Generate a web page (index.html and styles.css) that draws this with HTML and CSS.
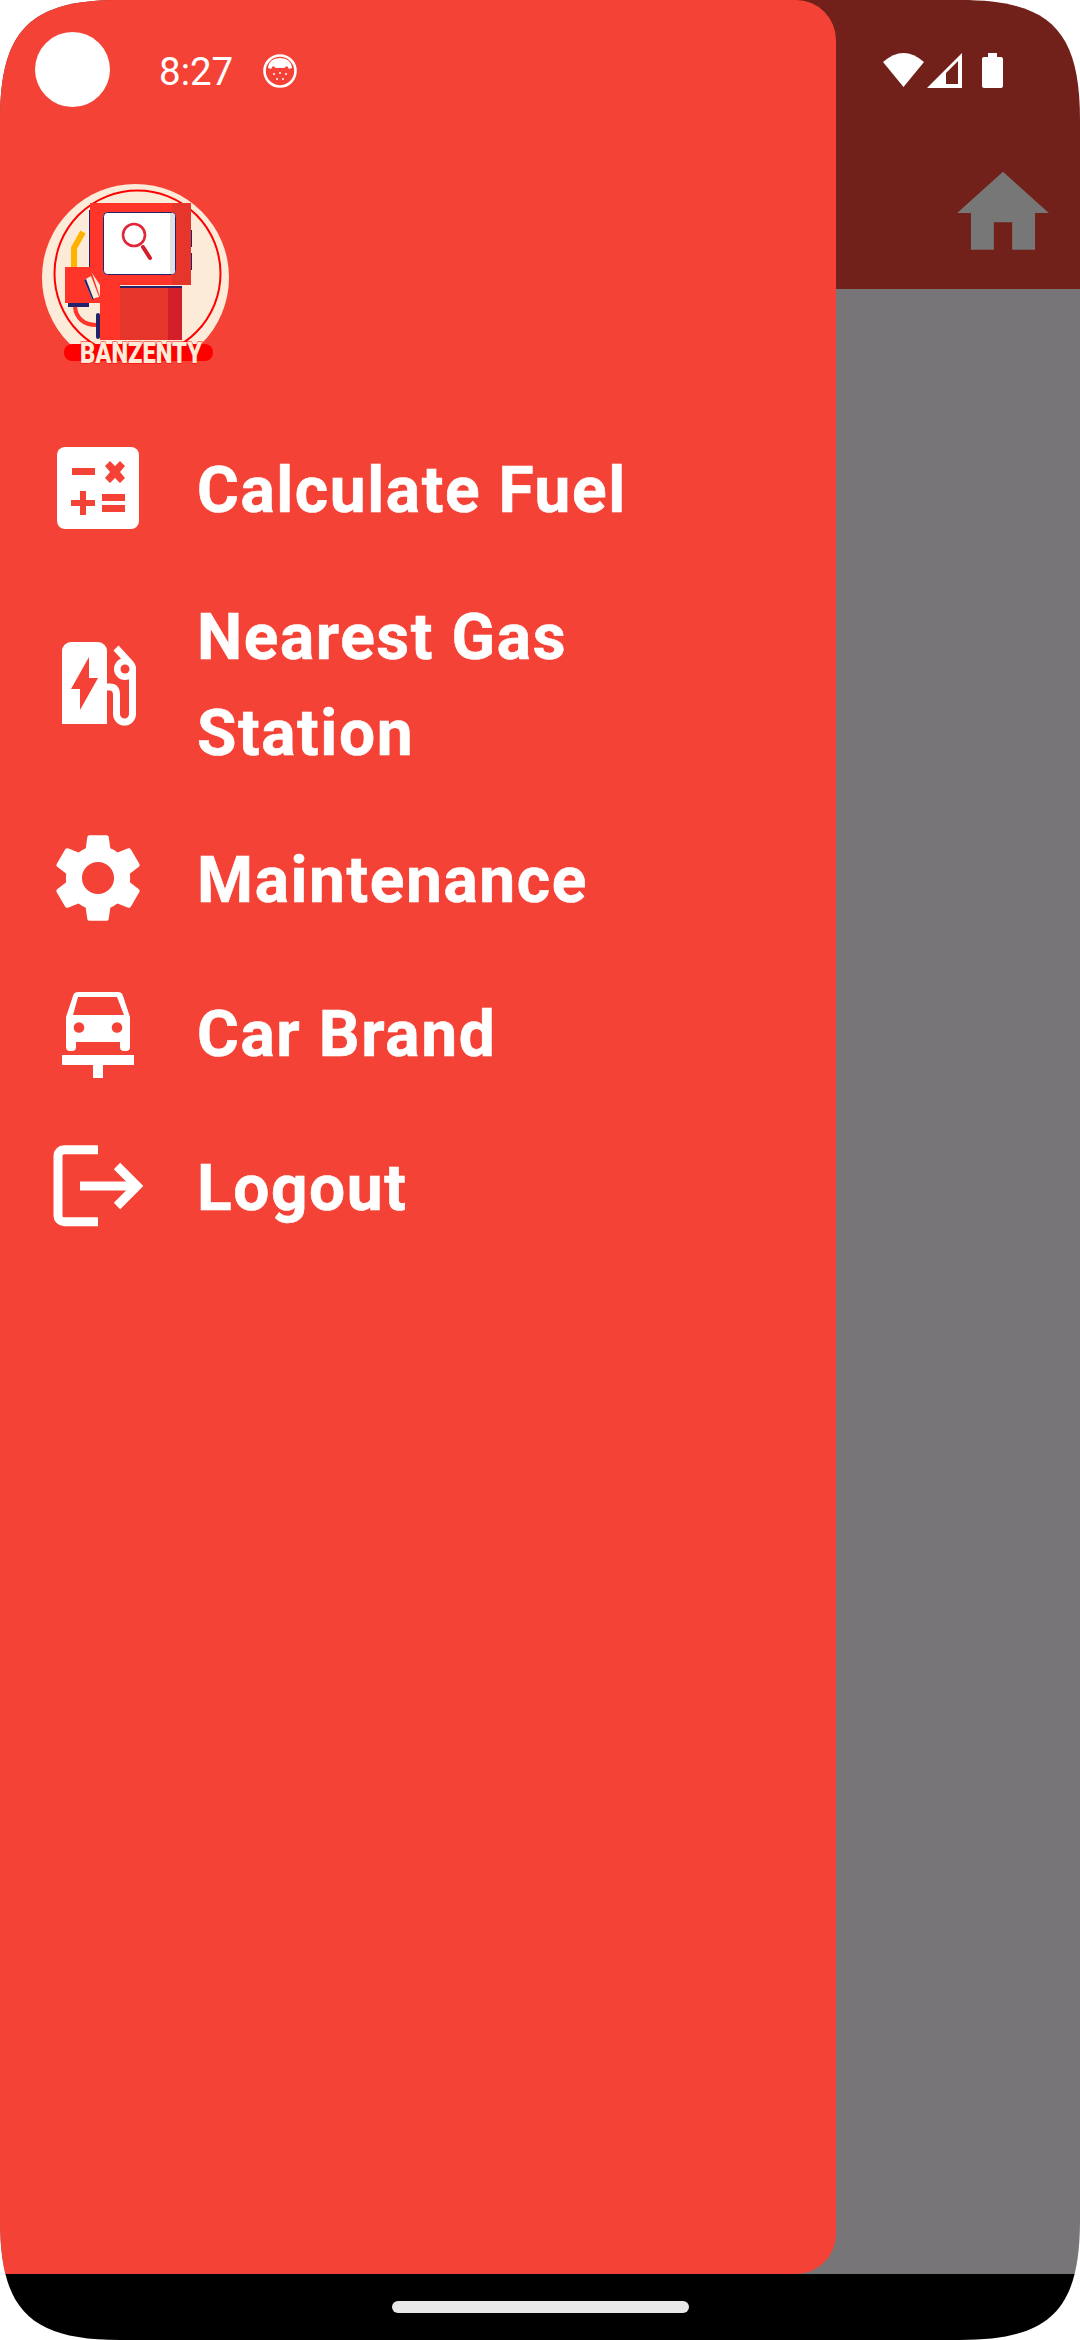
FILE: index.html
```html
<!DOCTYPE html>
<html lang="en">
  <head>
    <meta charset="UTF-8" />
    <meta name="viewport" content="width=device-width, initial-scale=1.0" />
    <title>Banzenty</title>
    <link rel="stylesheet" href="styles.css">
  </head>
  <body>
    <div class="screen">
      <header class="appbar">
        <svg class="home-icon" viewBox="0 0 24 24"><path d="M10 20v-6h4v6h5v-8h3L12 3 2 12h3v8z" /></svg>
      </header>
      <main class="scrim"></main>
      <footer class="navbar"><span class="nav-handle"></span></footer>

      <aside class="drawer">
        <svg class="logo" viewBox="0 0 230 210">
          <clipPath id="logo-cut"><rect x="0" y="0" width="230" height="178" /></clipPath>
          <g clip-path="url(#logo-cut)">
            <circle cx="115.500" cy="107.500" r="93.500" fill="#fdebd9" />
            <circle cx="117.500" cy="103.500" r="83" fill="none" stroke="#f00" stroke-width="2" />
          </g>
          <rect x="69" y="40" width="2" height="57" fill="#23236b" />
          <rect x="170" y="60" width="2" height="17" fill="#23236b" />
          <rect x="170" y="83" width="2" height="17" fill="#23236b" />
          <polyline points="63,62 54,78 54,97" fill="none" stroke="#ffb300" stroke-width="6" />
          <path d="M70 33H152V115H100V170H80V115L70 100z" fill="#ff3529" />
          <rect x="152" y="33" width="19" height="82" fill="#e6352a" />
          <rect x="100" y="116" width="62" height="2" fill="#23236b" />
          <rect x="100" y="118" width="48" height="52" fill="#e6352a" />
          <rect x="148" y="118" width="14" height="52" fill="#d21f2a" />
          <rect x="76" y="143" width="4" height="26" rx="2" fill="#23236b" />
          <rect x="83.500" y="42.500" width="72" height="62" rx="4" fill="#fff" stroke="#23236b" stroke-width="1" />
          <path d="M150 43h2a3 3 0 0 1 3 3v55a3 3 0 0 1-3 3h-2z" fill="#e0e0e4" />
          <circle cx="114" cy="65" r="11" fill="#fff" stroke="#e0263a" stroke-width="2.600" />
          <line x1="123" y1="77" x2="130" y2="88" stroke="#d21f2a" stroke-width="4" stroke-linecap="round" />
          <rect x="48" y="132" width="21" height="5" fill="#23236b" />
          <path d="M55 137C56 148 64 155 76 155" fill="none" stroke="#ff3529" stroke-width="4" />
          <path d="M45 97H70L80 127V133H45z" fill="#ff3529" />
          <path d="M64 110L71 106L79 127L72 129z" fill="#fdebd9" />
          <path d="M64 110L66 109L74 130L72 129z" fill="#23236b" />
          <rect x="44" y="174" width="149" height="17" rx="8" fill="#f00" />
          <text class="logo-text" x="60" y="192.500" textLength="122" lengthAdjust="spacingAndGlyphs">BANZENTY</text>
        </svg>

        <nav class="menu">
          <div class="menu-row">
            <svg class="menu-icon" viewBox="0 0 100 100">
              <rect x="9" y="9" width="82" height="82" rx="8" fill="#fff" />
              <g fill="#f44336">
                <rect x="24" y="30" width="23" height="7" />
                <path d="M62 23l5 5 5-5 5 5-5 6 5 6-5 5-5-5-5 5-5-5 5-6-5-6z" />
                <path d="M32 53h6v9h9v6h-9v9h-6v-9h-9v-6h9z" />
                <rect x="54" y="56" width="23" height="7" />
                <rect x="54" y="67" width="23" height="7" />
              </g>
            </svg>
            <span class="menu-label">Calculate Fuel</span>
          </div>
          <div class="menu-row">
            <svg class="menu-icon" viewBox="0 0 100 100">
              <path d="M14 91V18a9 9 0 0 1 9-9h27a9 9 0 0 1 9 9v73z" fill="#fff" />
              <path d="M41 24L23 56H32V77L50 45H41z" fill="#f44336" />
              <path d="M59 54H62Q68.500 54 68.500 62V81A8 8 0 0 0 84.500 81V38Q84.500 33 81 29L68 15" fill="none" stroke="#fff" stroke-width="7" />
              <circle cx="77" cy="36" r="11" fill="#fff" />
              <circle cx="77" cy="36" r="4.500" fill="#f44336" />
            </svg>
            <span class="menu-label">Nearest Gas Station</span>
          </div>
          <div class="menu-row">
            <svg class="menu-icon" viewBox="0 0 100 100">
              <path transform="translate(-3.500 -3.500) scale(4.460)" fill="#fff" d="M19.14 12.94c.04-.3.06-.61.06-.94 0-.32-.02-.64-.07-.94l2.03-1.58c.18-.14.23-.41.12-.61l-1.92-3.32c-.12-.22-.37-.29-.59-.22l-2.39.96c-.5-.38-1.03-.7-1.62-.94l-.36-2.54c-.04-.24-.24-.41-.48-.41h-3.84c-.24 0-.43.17-.47.41l-.36 2.54c-.59.24-1.13.57-1.62.94l-2.39-.96c-.22-.08-.47 0-.59.22L2.74 8.87c-.12.21-.08.47.12.61l2.03 1.58c-.05.3-.09.63-.09.94s.02.64.07.94l-2.03 1.58c-.18.14-.23.41-.12.61l1.92 3.32c.12.22.37.29.59.22l2.39-.96c.5.38 1.03.7 1.62.94l.36 2.54c.05.24.24.41.48.41h3.84c.24 0 .44-.17.47-.41l.36-2.54c.59-.24 1.13-.56 1.62-.94l2.39.96c.22.08.47 0 .59-.22l1.92-3.32c.12-.22.07-.47-.12-.61l-2.01-1.58zM12 15.600c-1.980 0-3.600-1.620-3.600-3.600s1.620-3.600 3.600-3.600 3.600 1.620 3.600 3.600-1.620 3.600-3.600 3.600z" />
            </svg>
            <span class="menu-label">Maintenance</span>
          </div>
          <div class="menu-row">
            <svg class="menu-icon" viewBox="0 -3 100 100">
              <path d="M18 32L25 11Q26 7 30 7H70Q74 7 75 11L82 32V62Q82 66 78 66H76Q72 66 72 62V57H28V62Q28 66 24 66H22Q18 66 18 62z" fill="#fff" />
              <path d="M25 30L30 12H69L76 30z" fill="#f44336" />
              <circle cx="31" cy="42.500" r="5.300" fill="#f44336" />
              <circle cx="69" cy="42.500" r="5.300" fill="#f44336" />
              <path d="M14 70H86V80H55V93H45V80H14z" fill="#fff" />
            </svg>
            <span class="menu-label">Car Brand</span>
          </div>
          <div class="menu-row">
            <svg class="menu-icon" viewBox="0 0 100 100">
              <g fill="none" stroke="#fff" stroke-width="9">
                <path d="M50 13.700H16A6 6 0 0 0 10 19.700V79.700A6 6 0 0 0 16 85.700H50" />
                <path d="M32 50H88" />
                <path d="M69 30L89 50L69 70" />
              </g>
            </svg>
            <span class="menu-label">Logout</span>
          </div>
        </nav>
      </aside>

      <div class="statusbar">
        <span class="camera-dot"></span>
        <span class="status-time">8:27</span>
        <svg class="status-app" viewBox="0 0 34 34">
          <circle cx="17" cy="17" r="15.500" fill="none" stroke="#fff" stroke-width="2.600" />
          <path d="M5 14Q6 4 17 4T29 14L26 15L24 12L21 14H13L10 12L8 15z" fill="#fff" />
          <g fill="#fff">
            <circle cx="11" cy="20" r="1" /><circle cx="17" cy="19" r="1" /><circle cx="23" cy="20" r="1" />
            <circle cx="14" cy="25" r="1" /><circle cx="20" cy="25" r="1" />
          </g>
        </svg>
        <div class="status-right">
          <svg class="status-wifi" viewBox="0 0 41 35"><path d="M0 9Q20.500 -9 41 9L20.500 34z" fill="#fff" /></svg>
          <svg class="status-signal" viewBox="0 0 35 35"><path fill-rule="evenodd" d="M0 35L35 0V35zM19 31H31V8L19 20z" fill="#fff" /></svg>
          <svg class="status-battery" viewBox="0 0 21 35"><path d="M6 0H15V4H19a2 2 0 0 1 2 2V33a2 2 0 0 1-2 2H2a2 2 0 0 1-2-2V6a2 2 0 0 1 2-2H6z" fill="#fff" /></svg>
        </div>
      </div>
    </div>
  </body>
</html>
```

FILE: styles.css
```css
body {
  margin: 0;
  background-color: #fff;
  font-family: "Roboto", sans-serif;
}

.screen {
  position: relative;
  width: 1080px;
  height: 2340px;
  display: flex;
  flex-direction: column;
  overflow: hidden;
  clip-path: path("M0 120C0 30 30 0 120 0H960C1050 0 1080 30 1080 120V2220C1080 2310 1050 2340 960 2340H120C30 2340 0 2310 0 2220z");
}

.appbar {
  height: 289px;
  box-sizing: border-box;
  padding: 158px 22px 0 0;
  display: flex;
  justify-content: flex-end;
  background-color: #71201a;
}

.home-icon {
  width: 110px;
  height: 110px;
  fill: #777;
}

.scrim {
  flex: 1;
  background-color: #787578;
}

.navbar {
  height: 66px;
  display: flex;
  justify-content: center;
  padding-top: 27px;
  box-sizing: border-box;
  background-color: #000;
}

.nav-handle {
  width: 297px;
  height: 12px;
  border-radius: 6px;
  background-color: #e8e8e8;
}

/* drawer sits over the page */
.drawer {
  position: absolute;
  top: 0;
  left: 0;
  bottom: 66px;
  width: 836px;
  box-sizing: border-box;
  padding-top: 170px;
  border-radius: 0 40px 40px 0;
  background-color: #f44336;
}

.logo {
  display: block;
  width: 230px;
  height: 210px;
  margin-left: 20px;
}

.logo-text {
  font-family: "Roboto", sans-serif;
  font-weight: 900;
  font-size: 29px;
  fill: #fdebd9;
  stroke: #f00;
  stroke-width: 1;
  paint-order: stroke;
}

.menu {
  margin-top: 31px;
  display: flex;
  flex-direction: column;
}

.menu-row {
  min-height: 154px;
  box-sizing: border-box;
  padding: 19px 90px 19px 48px;
  display: flex;
  align-items: center;
  gap: 49px;
}

.menu-icon {
  flex: none;
  width: 100px;
  height: 100px;
}

.menu-label {
  margin-top: 6px;
  font-size: 64px;
  font-weight: 700;
  line-height: 96px;
  letter-spacing: 1.6px;
  color: #fff;
  -webkit-text-stroke: 0.6px #fff;
}

/* status bar is drawn above both the drawer and the app bar */
.statusbar {
  position: absolute;
  top: 0;
  left: 0;
  right: 0;
  height: 120px;
  box-sizing: border-box;
  padding: 32px 77px 0 35px;
  display: flex;
  align-items: flex-start;
}

.camera-dot {
  width: 75px;
  height: 75px;
  border-radius: 50%;
  background-color: #fff;
}

.status-time {
  margin-left: 49px;
  margin-top: 17px;
  font-size: 38.5px;
  line-height: 46px;
  color: #fff;
}

.status-app {
  width: 34px;
  height: 34px;
  margin-left: 30px;
  margin-top: 22px;
}

.status-right {
  margin-left: auto;
  margin-top: 21px;
  display: flex;
  align-items: flex-start;
}

.status-wifi {
  width: 41px;
  height: 35px;
}

.status-signal {
  width: 35px;
  height: 35px;
  margin-left: 3px;
}

.status-battery {
  width: 21px;
  height: 35px;
  margin-left: 20px;
}
```
